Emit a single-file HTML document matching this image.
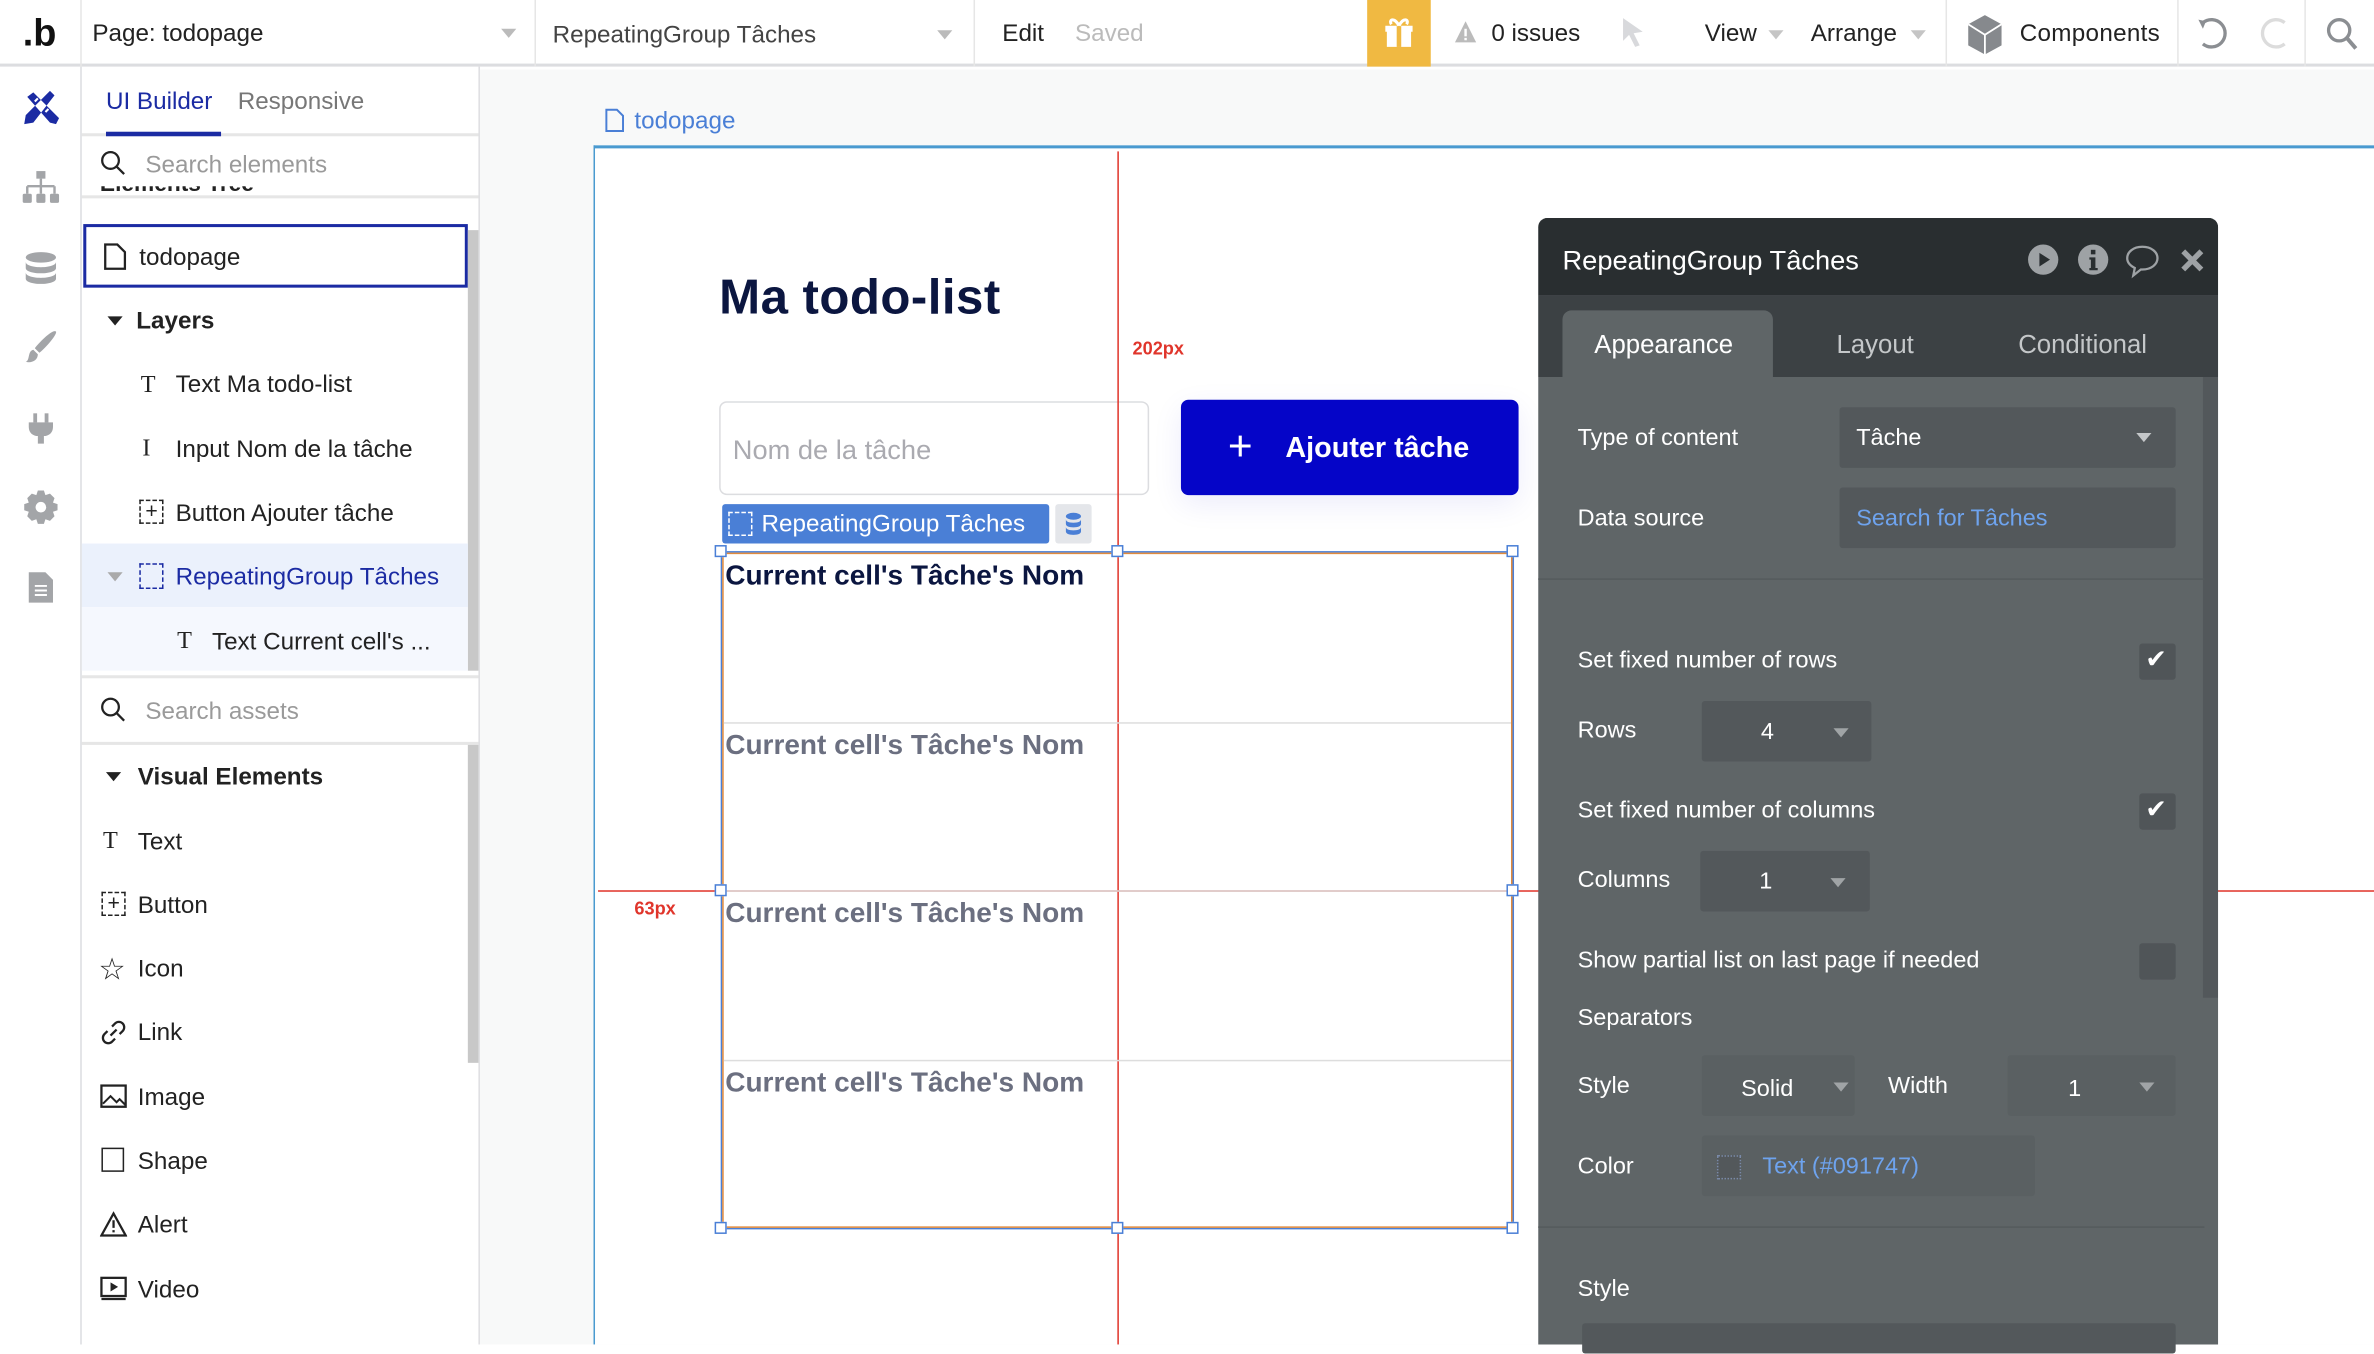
<!DOCTYPE html>
<html><head><meta charset="utf-8"><style>
*{box-sizing:border-box;margin:0;padding:0}
html,body{width:2374px;height:1344px;overflow:hidden;background:#fff}
#s{position:absolute;left:0;top:0;width:1568px;height:888px;transform:scale(1.51403);transform-origin:0 0;font-family:"Liberation Sans",sans-serif;color:#222}
.a{position:absolute}
.t{position:absolute;white-space:nowrap;line-height:1;margin-top:2px}
.g{color:#9a9a9a}
.ic{position:absolute;fill:#a3a5a8}
.lb{font-size:15.5px;color:#fff}
.sel{position:absolute;background:#53585b;border-radius:2px}
.tri{position:absolute;width:0;height:0;border-left:5px solid transparent;border-right:5px solid transparent;border-top:6px solid #a0a4a6}
.cb{position:absolute;width:24px;height:24px;background:#505558;border-radius:2px}
.h{position:absolute;width:8px;height:8px;border:1px solid #4a7fd6;background:#fff}
</style></head><body><div id="s">
<!-- top bar -->
<div class="a" style="left:0;top:0;width:1568px;height:44px;background:#fff;border-bottom:2px solid #dcdde0"></div>
<div class="t" style="left:15px;top:8px;font-size:25px;font-weight:bold;color:#111">.b</div>
<div class="a" style="left:53px;top:0;width:1px;height:44px;background:#e6e6e6"></div>
<div class="t" style="left:61px;top:13px;font-size:16px">Page: todopage</div>
<div class="tri" style="left:331px;top:19px;border-top-color:#bbb"></div>
<div class="a" style="left:353px;top:0;width:1px;height:44px;background:#e6e6e6"></div>
<div class="t" style="left:365px;top:14px;font-size:16px;color:#444">RepeatingGroup Tâches</div>
<div class="tri" style="left:619px;top:20px;border-top-color:#bbb"></div>
<div class="a" style="left:643px;top:0;width:1px;height:44px;background:#e6e6e6"></div>
<div class="t" style="left:662px;top:13px;font-size:16px">Edit</div>
<div class="t" style="left:710px;top:13px;font-size:16px;color:#bbb">Saved</div>
<div class="a" style="left:903px;top:0;width:42px;height:44px;background:#f0b942"></div>
<svg class="a" style="left:912px;top:9px" width="24" height="24" viewBox="0 0 24 24"><path d="M3 8h18v4H3zM4 12h16v10H4z" fill="#fff"/><rect x="10.5" y="8" width="3" height="14" fill="#f0b942"/><path d="M12 8C9 2 5 4 7 7M12 8c3-6 7-4 5-1" stroke="#fff" stroke-width="2" fill="none"/></svg>
<svg class="a" style="left:960px;top:13px" width="16" height="16" viewBox="0 0 16 16"><path d="M8 1L15 15H1z" fill="#bbb"/><rect x="7.2" y="6" width="1.6" height="5" fill="#fff"/><rect x="7.2" y="12" width="1.6" height="1.6" fill="#fff"/></svg>
<div class="t" style="left:985px;top:13px;font-size:16px">0 issues</div>
<svg class="a" style="left:1070px;top:11px" width="20" height="22" viewBox="0 0 20 22"><path d="M2 1l13 9-6 1 4 8-3 1-4-8-4 4z" fill="#d8d9dc"/></svg>
<div class="t" style="left:1126px;top:13px;font-size:16px">View</div>
<div class="tri" style="left:1168px;top:20px;border-top-color:#c5c5c5"></div>
<div class="t" style="left:1196px;top:13px;font-size:16px">Arrange</div>
<div class="tri" style="left:1262px;top:20px;border-top-color:#c5c5c5"></div>
<div class="a" style="left:1285px;top:0;width:1px;height:44px;background:#e6e6e6"></div>
<svg class="a" style="left:1298px;top:9px" width="26" height="28" viewBox="0 0 26 28"><path d="M13 1L24 7v14l-11 6L2 21V7z" fill="#86898d"/><path d="M2 7l11 7 11-7M13 14v13" stroke="#fff" stroke-width="1.2" fill="none"/></svg>
<div class="t" style="left:1334px;top:13px;font-size:16px;letter-spacing:0.2px">Components</div>
<div class="a" style="left:1438px;top:0;width:1px;height:44px;background:#e6e6e6"></div>
<svg class="a" style="left:1450px;top:10px" width="22" height="24" viewBox="0 0 22 24"><path d="M5 5a9 9 0 1 1 0 14" stroke="#8b8e92" stroke-width="2.2" fill="none"/><path d="M2 3l5 1-2 5z" fill="#8b8e92"/></svg>
<svg class="a" style="left:1492px;top:10px" width="22" height="24" viewBox="0 0 22 24"><path d="M17 5a9 9 0 1 0 0 14" stroke="#dcdcdc" stroke-width="2.2" fill="none"/></svg>
<div class="a" style="left:1522px;top:0;width:1px;height:44px;background:#e6e6e6"></div>
<svg class="a" style="left:1536px;top:11px" width="22" height="22" viewBox="0 0 22 22"><circle cx="9" cy="9" r="7" stroke="#8b8e92" stroke-width="2.2" fill="none"/><path d="M14 14l6 7" stroke="#8b8e92" stroke-width="2.6"/></svg>

<!-- icon strip -->
<div class="a" style="left:53px;top:44px;width:1px;height:844px;background:#dcdde0"></div>
<svg class="a" style="left:15px;top:59px" width="24" height="24" viewBox="0 0 24 24"><path d="M3 5l4-3 17 17-2 4-4-1zM21 4l-3-3L2 17l-1 6 6-1z" fill="#1b2ba3"/><path d="M8 8l2-2M11 11l2-2M15 15l2-2" stroke="#fff" stroke-width="1.4"/></svg>
<svg class="ic" style="left:14px;top:112px" width="26" height="24" viewBox="0 0 26 24"><rect x="10" y="1" width="6" height="5"/><path d="M13 6v5M4 11h18M4 11v5M13 11v5M22 11v5" stroke="#a3a5a8" stroke-width="1.6"/><rect x="1" y="16" width="6" height="6" rx="1"/><rect x="10" y="16" width="6" height="6" rx="1"/><rect x="19" y="16" width="6" height="6" rx="1"/></svg>
<svg class="ic" style="left:16px;top:166px" width="22" height="22" viewBox="0 0 22 22"><ellipse cx="11" cy="4" rx="10" ry="3.5"/><path d="M1 7c0 2 4 3.5 10 3.5S21 9 21 7v4c0 2-4 3.5-10 3.5S1 13 1 11zM1 14c0 2 4 3.5 10 3.5S21 16 21 14v4c0 2-4 3.5-10 3.5S1 20 1 18z"/></svg>
<svg class="ic" style="left:16px;top:218px" width="22" height="24" viewBox="0 0 22 24"><path d="M21 1c1 2-8 12-11 14l-3-3C10 8 19-1 21 1zM6 13l3 3c0 4-4 6-8 5 3-1 1-7 5-8z"/></svg>
<svg class="ic" style="left:18px;top:272px" width="18" height="22" viewBox="0 0 18 22"><rect x="4" y="1" width="2.5" height="6"/><rect x="11.5" y="1" width="2.5" height="6"/><path d="M1 7h16v3c0 4-3 6-6 6v5H7v-5c-3 0-6-2-6-6z"/></svg>
<svg class="ic" style="left:15px;top:323px" width="24" height="24" viewBox="0 0 24 24"><path d="M10 1h4l1 3 3-1 3 3-1 3 3 1v4l-3 1 1 3-3 3-3-1-1 3h-4l-1-3-3 1-3-3 1-3-3-1v-4l3-1-1-3 3-3 3 1z"/><circle cx="12" cy="12" r="3.5" fill="#fff"/></svg>
<svg class="ic" style="left:18px;top:377px" width="18" height="22" viewBox="0 0 18 22"><path d="M1 1h11l5 5v15H1z"/><path d="M5 10h8M5 13h8M5 16h8" stroke="#fff" stroke-width="1.3"/></svg>

<!-- left panel -->
<div class="a" style="left:316px;top:44px;width:1px;height:844px;background:#dcdde0"></div>
<div class="t" style="left:70px;top:58px;font-size:16px;color:#1b2ba3">UI Builder</div>
<div class="t" style="left:157px;top:58px;font-size:16px;color:#777">Responsive</div>
<div class="a" style="left:54px;top:88px;width:262px;height:2px;background:#e6e6e6"></div>
<div class="a" style="left:70px;top:87px;width:76px;height:3px;background:#1b2ba3"></div>
<svg class="a" style="left:66px;top:99px" width="18" height="18" viewBox="0 0 18 18"><circle cx="7" cy="7" r="5.5" stroke="#222" stroke-width="1.5" fill="none"/><path d="M11 11l5 5" stroke="#222" stroke-width="1.5"/></svg>
<div class="t g" style="left:96px;top:100px;font-size:16px">Search elements</div>
<div class="a" style="left:54px;top:129px;width:262px;height:2px;background:#e6e6e6"></div>
<div class="a" style="left:66px;top:123px;font-size:15px;font-weight:bold;height:7px;overflow:hidden;line-height:1;white-space:nowrap"><span style="position:relative;top:-9px">Elements Tree</span></div>
<div class="a" style="left:55px;top:148px;width:254px;height:42px;border:2px solid #1b2ba3;background:#fff"></div>
<svg class="a" style="left:68px;top:160px" width="16" height="19" viewBox="0 0 16 19"><path d="M1.5 1.5h8l5 5v11h-13z" stroke="#222" stroke-width="1.5" fill="none"/></svg>
<div class="t" style="left:92px;top:161px;font-size:16px">todopage</div>
<div class="a" style="left:309px;top:152px;width:7px;height:291px;background:#c8c8c8"></div>
<div class="tri" style="left:71px;top:209px;border-top-color:#222"></div>
<div class="t" style="left:90px;top:203px;font-size:16px;font-weight:bold">Layers</div>
<div class="t" style="left:93px;top:245px;font-size:16px;font-family:'Liberation Serif',serif">T</div>
<div class="t" style="left:116px;top:245px;font-size:16px">Text Ma todo-list</div>
<div class="t" style="left:94px;top:287px;font-size:16px;font-family:'Liberation Serif',serif">I</div>
<div class="t" style="left:116px;top:288px;font-size:16px">Input Nom de la tâche</div>
<div class="a" style="left:92px;top:330px;width:16px;height:16px;border:1.5px dashed #222"></div><div class="t" style="left:96px;top:328px;font-size:14px">+</div>
<div class="t" style="left:116px;top:330px;font-size:16px">Button Ajouter tâche</div>
<div class="a" style="left:54px;top:359px;width:255px;height:42px;background:#ebf1fc"></div>
<div class="tri" style="left:71px;top:378px;border-top-color:#aaa"></div>
<div class="a" style="left:92px;top:372px;width:16px;height:17px;border:1.5px dashed #1b2ba3"></div>
<div class="t" style="left:116px;top:372px;font-size:16px;color:#1b2ba3">RepeatingGroup Tâches</div>
<div class="a" style="left:54px;top:401px;width:255px;height:42px;background:#f5f8fe"></div>
<div class="t" style="left:117px;top:414px;font-size:16px;font-family:'Liberation Serif',serif">T</div>
<div class="t" style="left:140px;top:415px;font-size:16px">Text Current cell's ...</div>
<div class="a" style="left:54px;top:446px;width:262px;height:2px;background:#e6e6e6"></div>
<svg class="a" style="left:66px;top:460px" width="18" height="18" viewBox="0 0 18 18"><circle cx="7" cy="7" r="5.5" stroke="#222" stroke-width="1.5" fill="none"/><path d="M11 11l5 5" stroke="#222" stroke-width="1.5"/></svg>
<div class="t g" style="left:96px;top:461px;font-size:16px">Search assets</div>
<div class="a" style="left:54px;top:490px;width:262px;height:2px;background:#e6e6e6"></div>
<div class="a" style="left:309px;top:492px;width:7px;height:210px;background:#c8c8c8"></div>
<div class="tri" style="left:70px;top:510px;border-top-color:#222"></div>
<div class="t" style="left:91px;top:504px;font-size:16px;font-weight:bold">Visual Elements</div>
<div class="t" style="left:68px;top:546px;font-size:16px;font-family:'Liberation Serif',serif">T</div><div class="t" style="left:91px;top:547px;font-size:16px">Text</div>
<div class="a" style="left:67px;top:589px;width:16px;height:16px;border:1.5px dashed #222"></div><div class="t" style="left:71px;top:587px;font-size:14px">+</div><div class="t" style="left:91px;top:589px;font-size:16px">Button</div>
<div class="t" style="left:65px;top:629px;font-size:20px">☆</div><div class="t" style="left:91px;top:631px;font-size:16px">Icon</div>
<svg class="a" style="left:66px;top:673px" width="18" height="18" viewBox="0 0 18 18"><path d="M7 11l4-4M8 5l2-2a3 3 0 0 1 5 5l-2 2M10 13l-2 2a3 3 0 0 1-5-5l2-2" stroke="#222" stroke-width="1.5" fill="none"/></svg><div class="t" style="left:91px;top:673px;font-size:16px">Link</div>
<svg class="a" style="left:66px;top:716px" width="18" height="16" viewBox="0 0 18 16"><rect x="1" y="1" width="16" height="14" stroke="#222" stroke-width="1.5" fill="none"/><path d="M2 13l5-5 4 4 2-2 4 4" stroke="#222" stroke-width="1.3" fill="none"/></svg><div class="t" style="left:91px;top:716px;font-size:16px">Image</div>
<div class="a" style="left:67px;top:758px;width:15px;height:16px;border:1.5px solid #222"></div><div class="t" style="left:91px;top:758px;font-size:16px">Shape</div>
<svg class="a" style="left:66px;top:800px" width="18" height="17" viewBox="0 0 18 17"><path d="M9 1.5L17 16H1z" stroke="#222" stroke-width="1.5" fill="none"/><path d="M9 6v5M9 12.5v1.5" stroke="#222" stroke-width="1.5"/></svg><div class="t" style="left:91px;top:800px;font-size:16px">Alert</div>
<svg class="a" style="left:66px;top:843px" width="18" height="16" viewBox="0 0 18 16"><rect x="1" y="1" width="16" height="12" stroke="#222" stroke-width="1.5" fill="none"/><path d="M7 4l5 3-5 3z" fill="#222"/><path d="M1 15h16" stroke="#222" stroke-width="1.5"/></svg><div class="t" style="left:91px;top:843px;font-size:16px">Video</div>

<!-- canvas -->
<div class="a" style="left:317px;top:46px;width:1251px;height:842px;background:#f8f9f9"></div>
<svg class="a" style="left:399px;top:71px" width="14" height="17" viewBox="0 0 14 17"><path d="M1.5 1.5h7l4 4v10h-11z" stroke="#4a7fd6" stroke-width="1.3" fill="none"/></svg>
<div class="t" style="left:419px;top:71px;font-size:16px;color:#4a7fd6">todopage</div>
<div class="a" style="left:392px;top:96px;width:1176px;height:792px;background:#fff;border-top:2px solid #4a9ad0;border-left:1px solid #4a9ad0"></div>
<div class="t" style="left:475px;top:178px;font-size:32.5px;font-weight:bold;color:#0b1640;letter-spacing:0.3px">Ma todo-list</div>
<div class="a" style="left:475px;top:265px;width:284px;height:62px;border:1.5px solid #dcdde0;border-radius:5px"></div>
<div class="t" style="left:484px;top:286px;font-size:18px;color:#aaaab0">Nom de la tâche</div>
<div class="a" style="left:780px;top:264px;width:223px;height:63px;background:#0505c8;border-radius:5px;box-shadow:0 6px 20px rgba(5,5,200,0.08)"></div>
<div class="t" style="left:811px;top:279px;font-size:28px;color:#fff">+</div>
<div class="t" style="left:849px;top:285px;font-size:19px;font-weight:bold;color:#fff">Ajouter tâche</div>
<div class="a" style="left:738px;top:100px;width:1px;height:788px;background:#e0352b"></div>
<div class="a" style="left:395px;top:588px;width:1173px;height:1px;background:#e0352b"></div>
<div class="t" style="left:748px;top:222px;font-size:12px;font-weight:bold;color:#e0352b">202px</div>
<div class="t" style="left:419px;top:592px;font-size:12px;font-weight:bold;color:#e0352b">63px</div>
<div class="a" style="left:477px;top:333px;width:216px;height:26px;background:#4a7fd6;border-radius:2px"></div>
<div class="a" style="left:481px;top:338px;width:16px;height:16px;border:1.5px dashed #fff"></div>
<div class="t" style="left:503px;top:337px;font-size:16px;color:#fff">RepeatingGroup Tâches</div>
<div class="a" style="left:697px;top:333px;width:24px;height:26px;background:#e4e6ea;border-radius:2px"></div>
<svg class="a" style="left:703px;top:338px" width="12" height="16" viewBox="0 0 12 16"><ellipse cx="6" cy="3" rx="5" ry="2.3" fill="#4a7fd6"/><path d="M1 5c0 1.5 2 2.3 5 2.3S11 6.5 11 5v3c0 1.5-2 2.3-5 2.3S1 9.5 1 8zM1 10c0 1.5 2 2.3 5 2.3S11 11.5 11 10v3c0 1.5-2 2.3-5 2.3S1 14.5 1 13z" fill="#4a7fd6"/></svg>
<div class="a" style="left:476px;top:364px;width:524px;height:448px;border:1px solid #4a7fd6"></div>
<div class="a" style="left:477px;top:365px;width:522px;height:446px;border:1px solid #e08a3c"></div>
<div class="a" style="left:478px;top:477px;width:520px;height:1px;background:#ddd"></div>
<div class="a" style="left:478px;top:588px;width:520px;height:1px;background:#ddd"></div>
<div class="a" style="left:478px;top:700px;width:520px;height:1px;background:#ddd"></div>
<div class="t" style="left:479px;top:369px;font-size:18.5px;font-weight:bold;color:#0b1640">Current cell's Tâche's Nom</div>
<div class="t" style="left:479px;top:481px;font-size:18.5px;font-weight:bold;color:#6b6f80">Current cell's Tâche's Nom</div>
<div class="t" style="left:479px;top:592px;font-size:18.5px;font-weight:bold;color:#6b6f80">Current cell's Tâche's Nom</div>
<div class="t" style="left:479px;top:704px;font-size:18.5px;font-weight:bold;color:#6b6f80">Current cell's Tâche's Nom</div>
<div class="h" style="left:472px;top:360px"></div><div class="h" style="left:734px;top:360px"></div><div class="h" style="left:995px;top:360px"></div>
<div class="h" style="left:472px;top:584px"></div><div class="h" style="left:995px;top:584px"></div>
<div class="h" style="left:472px;top:807px"></div><div class="h" style="left:734px;top:807px"></div><div class="h" style="left:995px;top:807px"></div>

<!-- property panel -->
<div class="a" style="left:1016px;top:144px;width:449px;height:744px;background:#5f6567;border-radius:6px 6px 0 0;overflow:hidden">
 <div class="a" style="left:0;top:0;width:449px;height:51px;background:#292e30"></div>
 <div class="a" style="left:0;top:51px;width:449px;height:54px;background:#3c4144"></div>
 <div class="a" style="left:16px;top:61px;width:139px;height:44px;background:#5f6567;border-radius:6px 6px 0 0"></div>
 <div class="a" style="left:439px;top:105px;width:10px;height:410px;background:#53585b"></div>
</div>
<div class="t" style="left:1032px;top:161px;font-size:18px;color:#fff">RepeatingGroup Tâches</div>
<svg class="a" style="left:1339px;top:161px" width="21" height="21" viewBox="0 0 21 21"><circle cx="10.5" cy="10.5" r="10" fill="#9ea2a5"/><path d="M8 6l7 4.5L8 15z" fill="#292e30"/></svg>
<svg class="a" style="left:1372px;top:161px" width="21" height="21" viewBox="0 0 21 21"><circle cx="10.5" cy="10.5" r="10" fill="#9ea2a5"/><rect x="9" y="4" width="3" height="3" fill="#292e30"/><path d="M8 9h4v7h1.5v1.5h-5.5V16H9v-5.5H8z" fill="#292e30"/></svg>
<svg class="a" style="left:1403px;top:161px" width="24" height="23" viewBox="0 0 24 23"><path d="M12 2C6 2 2 5.5 2 9.5c0 3 2 5 5 6.5l-1 5 5-4h1c6 0 10-3.5 10-7.5S18 2 12 2z" stroke="#9ea2a5" stroke-width="1.5" fill="none"/></svg>
<svg class="a" style="left:1440px;top:164px" width="16" height="16" viewBox="0 0 16 16"><path d="M2 2l12 12M14 2L2 14" stroke="#9ea2a5" stroke-width="3.6"/></svg>
<div class="t" style="left:1053px;top:217px;font-size:17px;color:#fff">Appearance</div>
<div class="t" style="left:1213px;top:217px;font-size:17px;color:#c4c7c9">Layout</div>
<div class="t" style="left:1333px;top:217px;font-size:17px;color:#c4c7c9">Conditional</div>

<div class="t lb" style="left:1042px;top:280px">Type of content</div>
<div class="sel" style="left:1215px;top:269px;width:222px;height:40px"></div>
<div class="t lb" style="left:1226px;top:280px">Tâche</div>
<div class="tri" style="left:1411px;top:286px;border-top-color:#c4c7c9"></div>
<div class="t lb" style="left:1042px;top:333px">Data source</div>
<div class="sel" style="left:1215px;top:322px;width:222px;height:40px"></div>
<div class="t lb" style="left:1226px;top:333px;color:#6ea3ee">Search for Tâches</div>
<div class="a" style="left:1016px;top:382px;width:440px;height:1px;background:#555b5d"></div>

<div class="t lb" style="left:1042px;top:427px">Set fixed number of rows</div>
<div class="cb" style="left:1413px;top:425px"></div><div class="t" style="left:1417px;top:425px;font-size:17px;color:#fff">✔</div>
<div class="t lb" style="left:1042px;top:473px">Rows</div>
<div class="sel" style="left:1124px;top:463px;width:112px;height:40px"></div>
<div class="t lb" style="left:1163px;top:474px">4</div><div class="tri" style="left:1211px;top:481px"></div>
<div class="t lb" style="left:1042px;top:526px">Set fixed number of columns</div>
<div class="cb" style="left:1413px;top:524px"></div><div class="t" style="left:1417px;top:524px;font-size:17px;color:#fff">✔</div>
<div class="t lb" style="left:1042px;top:572px">Columns</div>
<div class="sel" style="left:1123px;top:562px;width:112px;height:40px"></div>
<div class="t lb" style="left:1162px;top:573px">1</div><div class="tri" style="left:1209px;top:580px"></div>
<div class="t lb" style="left:1042px;top:625px">Show partial list on last page if needed</div>
<div class="cb" style="left:1413px;top:623px"></div>
<div class="t lb" style="left:1042px;top:663px">Separators</div>
<div class="t lb" style="left:1042px;top:708px">Style</div>
<div class="sel" style="left:1124px;top:697px;width:101px;height:40px;background:#5a6062"></div>
<div class="t lb" style="left:1150px;top:710px">Solid</div><div class="tri" style="left:1211px;top:715px"></div>
<div class="t lb" style="left:1247px;top:708px">Width</div>
<div class="sel" style="left:1326px;top:697px;width:111px;height:40px;background:#5a6062"></div>
<div class="t lb" style="left:1366px;top:710px">1</div><div class="tri" style="left:1413px;top:715px"></div>
<div class="t lb" style="left:1042px;top:761px">Color</div>
<div class="sel" style="left:1124px;top:750px;width:220px;height:40px;background:#5a6062"></div>
<div class="a" style="left:1134px;top:763px;width:16px;height:16px;border:1px dotted #7a8aa8;background:#53585b"></div>
<div class="t lb" style="left:1164px;top:761px;color:#6ea3ee">Text (#091747)</div>
<div class="a" style="left:1016px;top:810px;width:440px;height:1px;background:#555b5d"></div>
<div class="t lb" style="left:1042px;top:842px">Style</div>
<div class="sel" style="left:1045px;top:874px;width:392px;height:20px"></div>
</div></body></html>
